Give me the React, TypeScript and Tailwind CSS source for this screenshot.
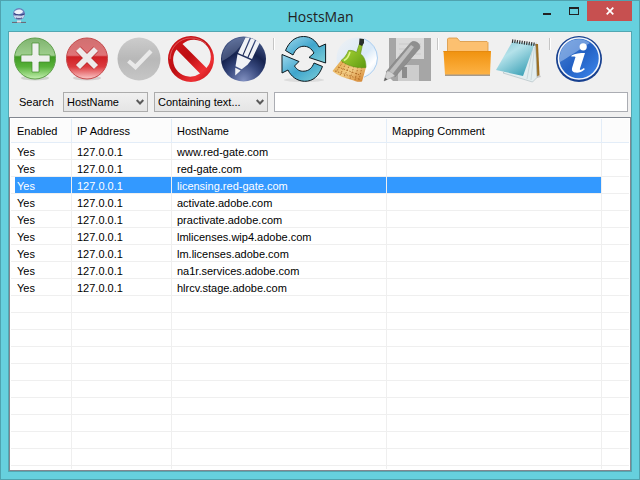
import type { ReactNode } from "react";

type Host = { ip: string; name: string; comment: string };

const hosts: Host[] = [
  "www.red-gate.com",
  "red-gate.com",
  "licensing.red-gate.com",
  "activate.adobe.com",
  "practivate.adobe.com",
  "lmlicenses.wip4.adobe.com",
  "lm.licenses.adobe.com",
  "na1r.services.adobe.com",
  "hlrcv.stage.adobe.com",
].map((name) => ({ ip: "127.0.0.1", name, comment: "" }));

const selectedName = "licensing.red-gate.com";
const blankRows = Array.from({ length: 60 }, (_, i) => i);

function Icon({ children }: { children: ReactNode }) {
  return (
    <svg viewBox="0 0 48 48" className="size-12" aria-hidden="true">
      {children}
    </svg>
  );
}

function AddIcon() {
  return (
    <Icon>
      <defs>
        <linearGradient id="add" x1="0" y1="0" x2="0" y2="1">
          <stop offset="0" stopColor="#7fb36f" />
          <stop offset=".42" stopColor="#9fcf8e" />
          <stop offset=".46" stopColor="#3f9a22" />
          <stop offset=".7" stopColor="#58b23a" />
          <stop offset="1" stopColor="#c4f0b0" />
        </linearGradient>
      </defs>
      <ellipse cx="24" cy="43" rx="14" ry="2.500" fill="#cfd3cd" />
      <circle cx="24" cy="23.500" r="20.500" fill="url(#add)" stroke="#5f9f4b" />
      <path d="M21 8h7v12h11v7H28v10h-7V27H10v-7h11z" fill="#eef0ee" stroke="#3f8a2a" strokeWidth=".7" />
    </Icon>
  );
}

function DeleteIcon() {
  return (
    <Icon>
      <defs>
        <linearGradient id="del" x1="0" y1="0" x2="0" y2="1">
          <stop offset="0" stopColor="#d07070" />
          <stop offset=".42" stopColor="#e07478" />
          <stop offset=".46" stopColor="#cf1f24" />
          <stop offset=".7" stopColor="#dc3a3e" />
          <stop offset="1" stopColor="#fbc9c9" />
        </linearGradient>
      </defs>
      <ellipse cx="24" cy="43" rx="14" ry="2.500" fill="#d5cfcf" />
      <circle cx="24" cy="23.500" r="20.500" fill="url(#del)" stroke="#c44a4c" />
      <path d="m15 14 18 18M33 14 15 32" stroke="#b52a2c" strokeWidth="7" />
      <path d="m15 14 18 18M33 14 15 32" stroke="#eeeaea" strokeWidth="5.800" />
    </Icon>
  );
}

function CheckIcon() {
  return (
    <Icon>
      <defs>
        <linearGradient id="chk" x1="0" y1="0" x2="0" y2="1">
          <stop offset="0" stopColor="#cccccc" />
          <stop offset=".5" stopColor="#b8b8b8" />
          <stop offset="1" stopColor="#c6c6c6" />
        </linearGradient>
      </defs>
      <circle cx="24" cy="24" r="21.500" fill="url(#chk)" />
      <path d="m13.500 26 7 6L36 16" fill="none" stroke="#e9e9e9" strokeWidth="4.200" />
    </Icon>
  );
}

function BanIcon() {
  return (
    <Icon>
      <defs>
        <linearGradient id="ban" x1="0" y1="0" x2="1" y2="1">
          <stop offset="0" stopColor="#d4181c" />
          <stop offset=".45" stopColor="#bd0e12" />
          <stop offset=".75" stopColor="#ee3034" />
          <stop offset="1" stopColor="#b80c10" />
        </linearGradient>
      </defs>
      <path
        fillRule="evenodd"
        d="M24 1a23 23 0 1 0 0 46 23 23 0 0 0 0-46ZM15.500 9 39.500 33A17 17 0 0 0 15.500 9ZM9.500 14.500 33 38.500A17 17 0 0 1 9.500 14.500Z"
        fill="url(#ban)"
      />
      <path d="M3 24A21 21 0 0 1 24 3a21 21 0 0 1 15 6" fill="none" stroke="#e0686a" strokeWidth=".8" />
    </Icon>
  );
}

function EditIcon() {
  return (
    <Icon>
      <defs>
        <radialGradient id="edit" cx=".5" cy=".98" r=".95">
          <stop offset="0" stopColor="#8190c0" />
          <stop offset=".4" stopColor="#36477c" />
          <stop offset=".65" stopColor="#16234f" />
          <stop offset="1" stopColor="#46598a" />
        </radialGradient>
      </defs>
      <circle cx="24.500" cy="24" r="22.500" fill="url(#edit)" />
      <path d="M3 26A21.500 21.500 0 0 1 26 2.500C22 12 14 21 3 26Z" fill="#8593b5" opacity=".4" />
      <path d="M26.500 2.500h4.300L23.500 20l-4.500-2zM32 3.200l4 1.500L28.500 22l-4-1.700zM37.200 5.300l3.500 2.500L33 24l-3.500-1.500z" fill="#f0f2f6" />
      <path d="m18.500 19.300 13.500 6-3.500 4.500-5.800 4.500-6.200-3z" fill="#f0f2f6" />
      <path d="m16.300 32.700 5.400 2.700-5.500 5z" fill="#f0f2f6" />
    </Icon>
  );
}

function RefreshIcon() {
  return (
    <Icon>
      <defs>
        <linearGradient id="ref" x1="0" y1="0" x2="1" y2="1">
          <stop offset="0" stopColor="#9fd9ee" />
          <stop offset=".5" stopColor="#3fa5cc" />
          <stop offset="1" stopColor="#7fd0d8" />
        </linearGradient>
      </defs>
      <ellipse cx="25" cy="45" rx="20" ry="2" fill="#dcdcdc" />
      <g fill="url(#ref)" stroke="#0c1a20" strokeWidth="1" strokeLinejoin="round">
        <path d="M6.500 15.500C10 7 16 1.500 24.500 1.500c7 0 12.500 4 15.500 10.500l6.600-3V28L30 22.500l5-4.500C32.500 13.500 29 11 24 11.300c-5 .5-8 4-10 8.700z" />
        <path d="m3 19.500 17 7-4.500 4.500c2.500 4 5.500 5.500 9.500 5.200 5-.3 8-3.200 10-8.200l8.500 3.500C40 41 34 46.500 25.500 46.300 18 46 12 41.500 9 35L3 38z" />
      </g>
    </Icon>
  );
}

function BroomIcon() {
  return (
    <Icon>
      <defs>
        <linearGradient id="disc" x1="0" y1="0" x2="1" y2="1">
          <stop offset="0" stopColor="#f0f1f3" />
          <stop offset=".55" stopColor="#d9e9f8" />
          <stop offset=".75" stopColor="#ffffff" />
          <stop offset="1" stopColor="#cfe0f2" />
        </linearGradient>
        <linearGradient id="head" x1="0" y1="0" x2="1" y2="1">
          <stop offset="0" stopColor="#b7de3c" />
          <stop offset="1" stopColor="#5d9a10" />
        </linearGradient>
        <linearGradient id="straw" x1="0" y1="0" x2="1" y2="1">
          <stop offset="0" stopColor="#e0a040" />
          <stop offset=".5" stopColor="#f2cd86" />
          <stop offset="1" stopColor="#d07c28" />
        </linearGradient>
      </defs>
      <circle cx="26" cy="23" r="20.500" fill="url(#disc)" />
      <path d="M33 3.800A20.500 20.500 0 0 1 33 42.300" fill="none" stroke="#a9cdf0" />
      <path d="m10 25.500 25 7L31 46.500c-4 1-7-.5-10-1.500-7-2-14-4-19.500-9z" fill="url(#straw)" />
      <path
        d="M12 27 5 37M15 28 9 40M19 29l-6 13M23 31l-4 13M27 32l-3 13M31 32l-3 13M7 32l22 8M4 36l24 8"
        stroke="#a8601c"
        strokeWidth=".8"
        strokeDasharray="1.500 1.500"
      />
      <path d="m28.500 8.500 3 1-2 9.500c3 2 5.500 6 5.500 13.500-8 1-19-1.500-25-7 3-2 6-6 7.500-10 3-.5 6 .5 8 2z" fill="url(#head)" stroke="#5f9215" strokeWidth=".6" />
      <path d="M19 17c-1 4-3 7-6 8.500" fill="none" stroke="#e2f58c" strokeWidth="1.500" />
      <path d="m28.500 3.500 4.500.5v4l-2 3-3-1.500z" fill="#2a2f2a" />
    </Icon>
  );
}

function SaveIcon() {
  return (
    <Icon>
      <path d="M6 3h42v43H10l-4-4z" fill="#a6a6a6" />
      <path d="M13 3h28v21H13z" fill="#dadada" />
      <path d="M16 9h22M16 14h22M16 19h22" stroke="#cacaca" />
      <path d="M15 30h21v16H15z" fill="#cdcdcd" />
      <path d="M19 32h5v11h-5z" fill="#8c8c8c" />
      <path d="M3 37 27 8.500c3-5 12 0 9.500 5L12 42z" fill="#8f8f8f" stroke="#808080" strokeWidth=".6" />
      <path d="M6 36.500 28 10l3 2L9.500 39z" fill="#bebebe" />
      <path d="m1 46 3-10c3 0 6 2 8 5z" fill="#d0d0d0" stroke="#9a9a9a" strokeWidth=".5" />
      <path d="m1 46 1-3.500 2.500 2z" fill="#606060" />
    </Icon>
  );
}

function FolderIcon() {
  return (
    <Icon>
      <defs>
        <linearGradient id="fold" x1="0" y1="0" x2="0" y2="1">
          <stop offset="0" stopColor="#f0920e" />
          <stop offset="1" stopColor="#fdb245" />
        </linearGradient>
      </defs>
      <path d="M2 39h45v2H2z" fill="#a59a8c" />
      <path d="M4.500 17V4l1-1H14l3 3.500h27l1 1V17z" fill="#fcc070" stroke="#d9953f" strokeWidth=".8" />
      <path d="M.5 16h47.500L47 39.500H2z" fill="url(#fold)" />
      <path d="M.5 16.500h47" stroke="#e58a10" />
    </Icon>
  );
}

function NotepadIcon() {
  return (
    <Icon>
      <defs>
        <linearGradient id="pad" x1="0" y1="0" x2=".7" y2="1">
          <stop offset="0" stopColor="#7fc0d0" />
          <stop offset=".4" stopColor="#b4e2ea" />
          <stop offset="1" stopColor="#3fa3b8" />
        </linearGradient>
      </defs>
      <path d="M36 40h9l1 2-8 2z" fill="#c9c9c9" />
      <path d="M40 9h3l1.500 31-3.500 2z" fill="#9c6f22" />
      <path d="m38 9 2.500.5 1.500 33-4.500 4.500L8 38z" fill="#e3eef0" stroke="#a9b9bd" strokeWidth=".6" />
      <path d="m38 11-6 33M39.500 12 36 45" stroke="#b8c8cc" strokeWidth=".6" />
      <path d="M17.500 6.500 39.500 9 28 41 1 35z" fill="url(#pad)" />
      <path d="m17 6 24 3.500" stroke="#333" strokeWidth="3.500" strokeDasharray="1.200 1.200" />
    </Icon>
  );
}

function InfoIcon() {
  return (
    <Icon>
      <defs>
        <linearGradient id="info" x1="0" y1="0" x2="1" y2="1">
          <stop offset="0" stopColor="#4f86d4" />
          <stop offset=".5" stopColor="#2361c4" />
          <stop offset="1" stopColor="#3f8af0" />
        </linearGradient>
      </defs>
      <circle cx="24" cy="24" r="23" fill="#17408f" />
      <circle cx="24" cy="23.500" r="20.500" fill="url(#info)" stroke="#f4f7fc" strokeWidth="1.600" />
      <path d="M5 27A19 19 0 0 1 35 8C28 12 14 22 5 27Z" fill="#a9c6ee" opacity=".55" />
      <circle cx="28.200" cy="11.800" r="3.600" fill="#fff" />
      <path d="M16.500 20.500C20 18.500 25 18 30 18l-5 15.500c-.5 2 .5 2 4-.5l.8 1.200C26 37.500 23 38 20 37.500c-3-.5-3.500-2.500-2.800-5L20.500 22c-1-.6-2.500-.6-4-.3z" fill="#fff" />
    </Icon>
  );
}

function ToolButton({ label, children }: { label: string; children: ReactNode }) {
  return (
    <button type="button" aria-label={label} title={label} className="flex w-13 items-center justify-center">
      {children}
    </button>
  );
}

function Separator() {
  return <div className="ml-1 mr-0.5 mt-1.5 h-3 w-0.5 border-l border-r border-l-[#c5c5c5] border-r-white" />;
}

function Dropdown({ label, options, className }: { label: string; options: string[]; className: string }) {
  return (
    <div className={`relative h-5 ${className}`}>
      <select
        aria-label={label}
        className="h-full w-full appearance-none border border-[#acacac] bg-linear-to-b from-[#f0f0f0] to-[#e5e5e5] px-[3px] leading-[18px]"
      >
        {options.map((o) => (
          <option key={o}>{o}</option>
        ))}
      </select>
      <svg viewBox="0 0 8 6" className="pointer-events-none absolute top-[7px] right-1 h-1.5 w-2" aria-hidden="true">
        <path d="m.7 1 3.300 3.500L7.300 1" fill="none" stroke="#5a5a5a" strokeWidth="2" />
      </svg>
    </div>
  );
}

function TitleBar() {
  return (
    <header className="flex h-[30px] shrink-0 items-start">
      <svg viewBox="0 0 16 16" className="mt-1.5 ml-[3px] size-4" aria-hidden="true">
        <circle cx="8" cy="7" r="6" fill="#6b80bc" />
        <path d="M3 5C5 2 10 1.500 12 4.500c-1 3-7 4-9 .5Z" fill="#eef2fa" />
        <path d="M2.500 8c2 2 4-1 6 0s3 1 5-.5c0 3-3 5-5.500 5s-5-1.500-5.500-4.500Z" fill="#c9d4ea" />
        <path d="M3 6.500c2 2 8 2 10.500.5M5 11c2 1 4 1 6 0" fill="none" stroke="#27306e" strokeWidth=".9" />
        <path d="M1 15.500h14" stroke="#6b6b78" strokeWidth="1.200" />
        <path d="M6 14.500h4" stroke="#e0e0e8" strokeWidth="2" />
      </svg>
      <h1 className="ml-20 flex-1 pt-1 text-center font-['Open_Sans',sans-serif] text-sm leading-6 text-[#222]">HostsMan</h1>
      <div className="flex">
        <button type="button" aria-label="Minimize" className="flex h-5 w-[26px] items-end justify-center pb-1.5">
          <span className="h-0.5 w-2 bg-[#222]" />
        </button>
        <button type="button" aria-label="Maximize" className="flex h-5 w-[27px] items-center justify-center">
          <span className="h-2 w-2.5 border border-t-2 border-[#222]" />
        </button>
        <button type="button" aria-label="Close" className="flex h-5 w-[45px] items-center justify-center bg-[#c75050]">
          <svg viewBox="0 0 8 8" className="size-2" aria-hidden="true">
            <path d="m.7.7 6.600 6.600M7.300.7.7 7.300" stroke="#fff" strokeWidth="1.700" />
          </svg>
        </button>
      </div>
    </header>
  );
}

function HostTable() {
  const head = "h-6 border-r border-b border-[#e3edf8] bg-[#fcfcfc] p-0 pt-0.5 pl-[5px] text-left font-normal";
  const cell = "h-[17px] border-r border-b border-[#efefef] p-0 leading-[18px] whitespace-nowrap";
  return (
    <table className="w-full table-fixed border-separate border-spacing-0">
      <colgroup>
        <col className="w-[61px]" />
        <col className="w-[100px]" />
        <col className="w-[215px]" />
        <col className="w-[215px]" />
        <col />
      </colgroup>
      <thead>
        <tr>
          <th className={head}>
            <span className="pl-px">Enabled</span>
          </th>
          <th className={head}>IP Address</th>
          <th className={head}>HostName</th>
          <th className={head}>Mapping Comment</th>
          <th className="border-b border-[#e3edf8] bg-[#fcfcfc] p-0" aria-label="Filler" />
        </tr>
      </thead>
      <tbody>
        {hosts.map((h) => {
          const on = h.name === selectedName;
          const fill = on ? "bg-[#3399ff] text-white" : "";
          return (
            <tr key={h.name} aria-selected={on}>
              <td className={`${cell} pl-1`}>
                <div className={`h-4 pl-0.5 ${fill}`}>Yes</div>
              </td>
              <td className={cell}>
                <div className={`h-4 pl-[5px] ${fill}`}>{h.ip}</div>
              </td>
              <td className={cell}>
                <div className={`h-4 pl-[5px] ${fill}`}>{h.name}</div>
              </td>
              <td className={cell}>
                <div className={`h-4 pl-[5px] ${fill}`}>{h.comment}</div>
              </td>
              <td className="border-b border-[#efefef] p-0" />
            </tr>
          );
        })}
        {blankRows.map((i) => (
          <tr key={i} aria-hidden="true">
            <td className={cell} />
            <td className={cell} />
            <td className={cell} />
            <td className={cell} />
            <td className="border-b border-[#efefef] p-0" />
          </tr>
        ))}
      </tbody>
    </table>
  );
}

export default function App() {
  return (
    <div className="flex h-screen flex-col border border-[#4fa3af] bg-[#66d0de] px-[7px] pb-[7px] font-['Liberation_Sans',Arial,sans-serif] text-[11px] text-black">
      <TitleBar />
      <main className="flex min-h-0 flex-1 flex-col border border-[#52a7b2] bg-[#f0f0f0]">
        <div role="toolbar" aria-label="Tools" className="flex h-[54px] shrink-0">
          <ToolButton label="Add"><AddIcon /></ToolButton>
          <ToolButton label="Delete"><DeleteIcon /></ToolButton>
          <ToolButton label="Enable"><CheckIcon /></ToolButton>
          <ToolButton label="Disable"><BanIcon /></ToolButton>
          <ToolButton label="Edit"><EditIcon /></ToolButton>
          <Separator />
          <ToolButton label="Refresh"><RefreshIcon /></ToolButton>
          <ToolButton label="Clean"><BroomIcon /></ToolButton>
          <ToolButton label="Save"><SaveIcon /></ToolButton>
          <Separator />
          <ToolButton label="Open folder"><FolderIcon /></ToolButton>
          <ToolButton label="Open in editor"><NotepadIcon /></ToolButton>
          <Separator />
          <ToolButton label="About"><InfoIcon /></ToolButton>
        </div>
        <form className="flex h-[31px] shrink-0 items-center pr-[3px] pl-2.5">
          <label htmlFor="query" className="w-11 pt-0.5">Search</label>
          <Dropdown label="Search field" options={["HostName", "IP Address", "Mapping Comment"]} className="w-[85px]" />
          <Dropdown label="Match type" options={["Containing text...", "Starting with...", "Equal to..."]} className="ml-1.5 w-[114px]" />
          <input id="query" type="text" className="ml-1.5 h-5 min-w-0 flex-1 border border-[#abadb3] bg-white px-1 outline-none" />
        </form>
        <section className="min-h-0 flex-1 overflow-hidden border border-[#828790] bg-white p-px">
          <div className="h-full overflow-hidden">
            <HostTable />
          </div>
        </section>
      </main>
    </div>
  );
}
